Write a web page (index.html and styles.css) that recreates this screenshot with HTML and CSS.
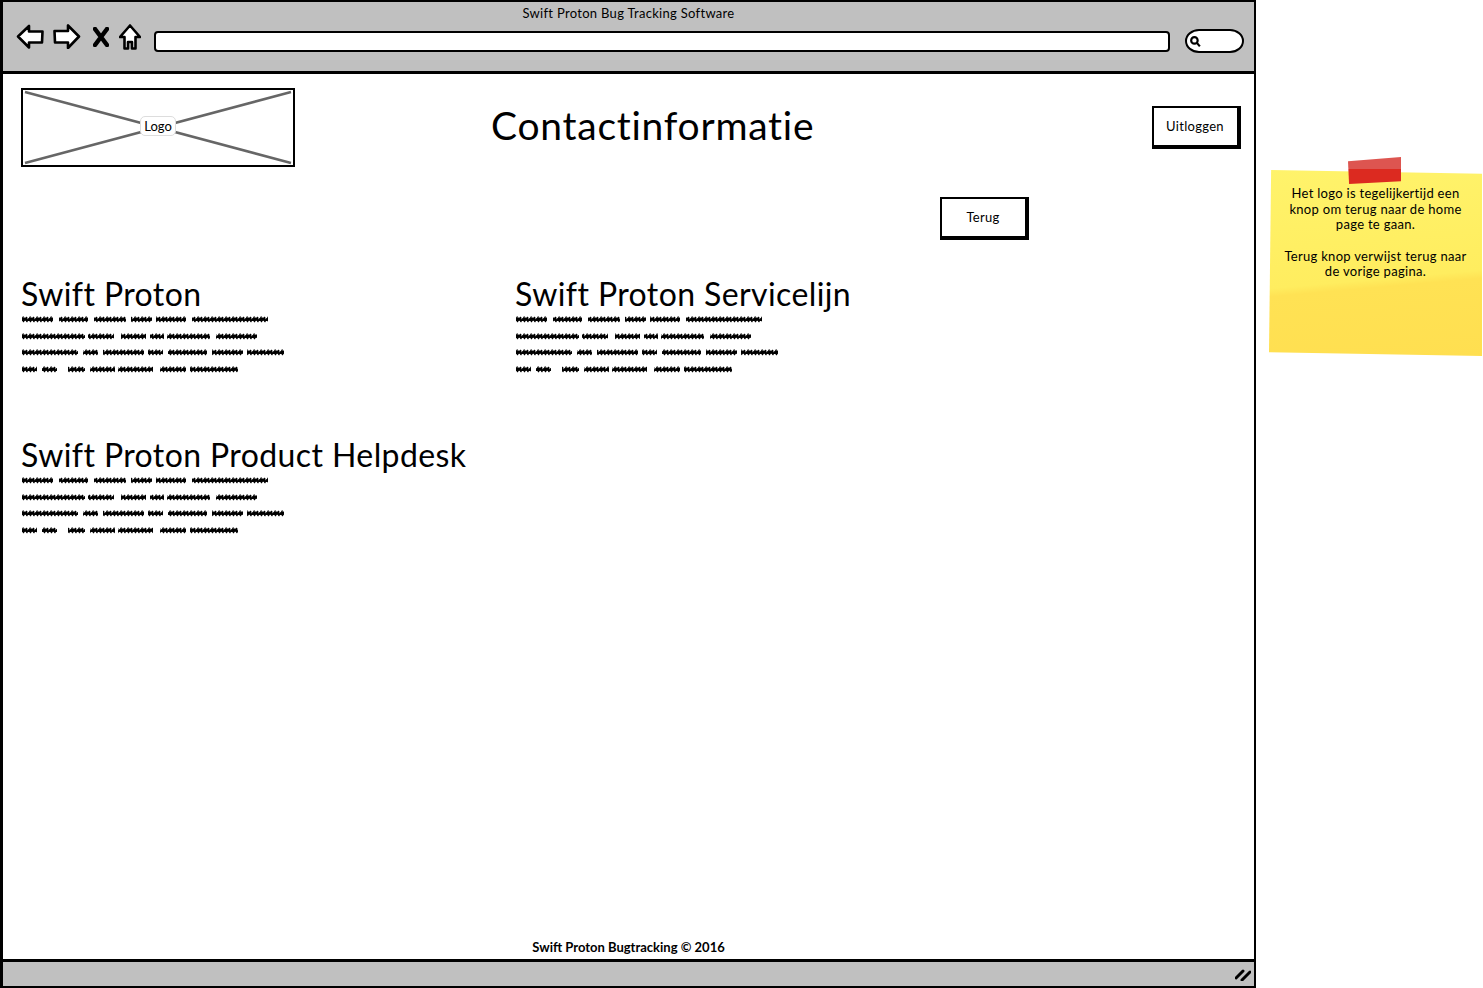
FILE: index.html
```html
<!DOCTYPE html>
<html lang="nl">
<head>
    <meta charset="UTF-8">
    <meta name="viewport" content="width=device-width, initial-scale=1.0">
    <title>Swift Proton Bug Tracking Software</title>
    <link rel="stylesheet" href="styles.css">
</head>
<body>
    <svg class="defs" width="0" height="0">
        <defs>
            <pattern id="scribble" width="7" height="8" patternUnits="userSpaceOnUse">
                <path d="M0 4.4 C2 5 3 3.8 4 4 S6 5 7 4.4" fill="none" stroke="#000" stroke-width="3"/>
                <path d="M0.5 5 L2.5 1.5 M4 5 L6 2 M2 7 L3.5 5 M5.5 7 L6.5 5.5" fill="none" stroke="#000" stroke-width="1.4"/>
            </pattern>
            <symbol id="scribble-text" viewBox="0 0 264 58">
                <g fill="url(#scribble)">
                    <g>
                        <rect x="1" y="0" width="31" height="8" rx="2"/><rect x="38" y="0" width="29" height="8" rx="2"/><rect x="73" y="0" width="32" height="8" rx="2"/><rect x="110" y="0" width="21" height="8" rx="2"/><rect x="135" y="0" width="30" height="8" rx="2"/><rect x="171" y="0" width="76" height="8" rx="2"/>
                    </g>
                    <g transform="translate(0 17)">
                        <rect x="1" y="0" width="63" height="8" rx="2"/><rect x="67" y="0" width="26" height="8" rx="2"/><rect x="100" y="0" width="25" height="8" rx="2"/><rect x="129" y="0" width="14" height="8" rx="2"/><rect x="146" y="0" width="43" height="8" rx="2"/><rect x="195" y="0" width="41" height="8" rx="2"/>
                    </g>
                    <g transform="translate(0 33)">
                        <rect x="1" y="0" width="56" height="8" rx="2"/><rect x="62" y="0" width="15" height="8" rx="2"/><rect x="82" y="0" width="41" height="8" rx="2"/><rect x="127" y="0" width="15" height="8" rx="2"/><rect x="147" y="0" width="39" height="8" rx="2"/><rect x="191" y="0" width="31" height="8" rx="2"/><rect x="226" y="0" width="37" height="8" rx="2"/>
                    </g>
                    <g transform="translate(0 50)">
                        <rect x="1" y="0" width="15" height="8" rx="2"/><rect x="21" y="0" width="15" height="8" rx="2"/><rect x="47" y="0" width="17" height="8" rx="2"/><rect x="69" y="0" width="25" height="8" rx="2"/><rect x="97" y="0" width="35" height="8" rx="2"/><rect x="139" y="0" width="26" height="8" rx="2"/><rect x="169" y="0" width="48" height="8" rx="2"/>
                    </g>
                </g>
            </symbol>
        </defs>
    </svg>

    <div class="page">
        <div class="window">
            <header class="toolbar">
                <div class="window-title">Swift Proton Bug Tracking Software</div>
                <div class="nav-row">
                    <svg class="nav-icon back" viewBox="0 0 28 25"><path d="M2 12.5 L13 2 V7.5 H26.5 L26 18.5 H13 V23.5 Z"/></svg>
                    <svg class="nav-icon forward" viewBox="0 0 28 25"><path d="M26 12.5 L15 1.5 V7 H1.5 L2 18.5 H15 V24 Z"/></svg>
                    <svg class="nav-icon close" viewBox="0 0 16 20"><path d="M2 2 L14 18 M14 2 L2 18"/></svg>
                    <svg class="nav-icon home" viewBox="0 0 22 26"><path d="M11 1.5 L21 13 H16.5 V24.5 H13 V18 H9 V24.5 H5.5 V13 H1 Z"/></svg>
                    <div class="address-bar"></div>
                    <div class="search-box">
                        <svg class="search-icon" viewBox="0 0 12 12"><circle cx="5" cy="5" r="3"/><path d="M7.5 7.5 L10 10.5"/></svg>
                    </div>
                </div>
            </header>

            <main class="content">
                <div class="top-row">
                    <div class="logo">
                        <svg class="logo-cross" viewBox="0 0 270 75" preserveAspectRatio="none"><path d="M2 2 L268 73 M268 2 L2 73"/></svg>
                        <span class="logo-label">Logo</span>
                    </div>
                    <h1 class="page-title">Contactinformatie</h1>
                    <button class="sketch-btn logout" type="button">Uitloggen</button>
                </div>

                <div class="back-row">
                    <button class="sketch-btn" type="button">Terug</button>
                </div>

                <div class="contact-grid">
                    <section class="contact">
                        <h2>Swift Proton</h2>
                        <svg class="scribble"><use href="#scribble-text"/></svg>
                    </section>
                    <section class="contact">
                        <h2>Swift Proton Servicelijn</h2>
                        <svg class="scribble"><use href="#scribble-text"/></svg>
                    </section>
                    <section class="contact">
                        <h2>Swift Proton Product Helpdesk</h2>
                        <svg class="scribble"><use href="#scribble-text"/></svg>
                    </section>
                </div>
            </main>

            <footer class="footer-text">Swift Proton Bugtracking &copy; 2016</footer>
            <div class="status-bar">
                <svg class="grip" viewBox="0 0 16 12"><path d="M1 9 L8 2 M7 11 L15 3"/></svg>
            </div>
        </div>

        <aside class="note-wrap">
            <div class="tape"></div>
            <div class="note">
                <p>Het logo is tegelijkertijd een<br>knop om terug naar de home<br>page te gaan.</p>
                <p>Terug knop verwijst terug naar<br>de vorige pagina.</p>
            </div>
        </aside>
    </div>
</body>
</html>
```

FILE: styles.css
```css
body {
    margin: 0;
    background-color: #fff;
    color: #000;
    font-family: "Lato", "Open Sans", sans-serif;
}
.defs {
    position: absolute;
}
.page {
    display: flex;
    height: 988px;
    overflow: hidden;
}
.window {
    display: flex;
    flex-direction: column;
    box-sizing: border-box;
    width: 1256px;
    height: 988px;
    flex-shrink: 0;
    border: solid #000;
    border-width: 2px 2px 2px 3px;
}
.toolbar {
    box-sizing: border-box;
    height: 72px;
    background-color: #c0c0c0;
    border-bottom: 3px solid #000;
}
.window-title {
    margin-top: 3px;
    font-size: 13px;
    line-height: 16px;
    letter-spacing: 0.3px;
    text-align: center;
}
.nav-row {
    display: flex;
    align-items: flex-start;
    margin-top: 3px;
    padding-left: 13px;
}
.nav-icon {
    fill: #fff;
    stroke: #000;
    stroke-width: 2.6;
    stroke-linejoin: round;
    flex-shrink: 0;
}
.back, .forward {
    width: 28px;
    height: 25px;
}
.forward {
    margin-left: 9px;
}
.close {
    width: 16px;
    height: 20px;
    margin: 3px 0 0 12px;
    stroke-width: 4.5;
    stroke-linecap: round;
}
.home {
    width: 22px;
    height: 26px;
    margin-left: 10px;
}
.address-bar {
    box-sizing: border-box;
    width: 1016px;
    height: 21px;
    margin: 7px 0 0 13px;
    background-color: #fff;
    border: 2.5px solid #000;
    border-radius: 4px;
}
.search-box {
    display: flex;
    align-items: center;
    box-sizing: border-box;
    width: 59px;
    height: 24px;
    margin: 5px 0 0 15px;
    padding-left: 2px;
    background-color: #fff;
    border: 2.5px solid #000;
    border-radius: 14px / 12px;
}
.search-icon {
    width: 13px;
    height: 13px;
    fill: none;
    stroke: #000;
    stroke-width: 2;
}
.content {
    flex: 1;
    padding: 14px 0 0 18px;
}
.top-row {
    display: flex;
    align-items: flex-start;
}
.logo {
    position: relative;
    display: flex;
    align-items: center;
    justify-content: center;
    box-sizing: border-box;
    width: 274px;
    height: 79px;
    border: 2px solid #000;
}
.logo-cross {
    position: absolute;
    top: 0;
    left: 0;
    width: 100%;
    height: 100%;
    stroke: #666;
    stroke-width: 2.5;
    fill: none;
}
.logo-label {
    position: relative;
    margin-bottom: 3px;
    padding: 2px 3px;
    background-color: #fff;
    border: 1px solid #ddd;
    border-radius: 5px;
    font-size: 13px;
    line-height: 14px;
}
.page-title {
    margin: 13px 0 0 196px;
    font-size: 39px;
    line-height: 48px;
    font-weight: 400;
    letter-spacing: 0.75px;
}
.sketch-btn {
    box-sizing: border-box;
    width: 89px;
    height: 43px;
    padding: 0 1px 1px 0;
    background-color: #fff;
    border: solid #000;
    border-width: 2px 4px 4px 2px;
    font-family: inherit;
    font-size: 13px;
    letter-spacing: 0.3px;
    color: #000;
}
.logout {
    margin: 18px 13px 0 auto;
}
.back-row {
    margin: 30px 0 0 919px;
}
.contact-grid {
    display: grid;
    grid-template-columns: 494px 494px;
    grid-auto-rows: 161px;
    margin-top: 34px;
}
.contact h2 {
    margin: 0;
    font-size: 32px;
    line-height: 40px;
    font-weight: 400;
    letter-spacing: 0.4px;
}
.scribble {
    display: block;
    width: 264px;
    height: 58px;
    margin-top: 1px;
}
.footer-text {
    font-size: 13px;
    line-height: 16px;
    font-weight: 700;
    text-align: center;
    margin-bottom: 4px;
}
.status-bar {
    display: flex;
    align-items: center;
    justify-content: flex-end;
    box-sizing: border-box;
    height: 27px;
    padding: 2px 3px 0 0;
    background-color: #c0c0c0;
    border-top: 3px solid #000;
}
.grip {
    width: 16px;
    height: 12px;
    fill: none;
    stroke: #000;
    stroke-width: 3;
    stroke-linecap: round;
}
.note-wrap {
    position: relative;
    flex-shrink: 0;
    width: 213px;
    height: 186px;
    margin: 170px 0 0 13px;
}
.note {
    box-sizing: border-box;
    height: 100%;
    padding: 16px 4px 0;
    background: linear-gradient(175deg, #fff36b 0%, #ffed5f 58%, #ffe254 62%, #ffdf50 100%);
    clip-path: polygon(1% 0, 100% 2%, 100% 100%, 0 98%);
    font-size: 13px;
    line-height: 15.6px;
    letter-spacing: 0.3px;
    text-align: center;
}
.note p {
    margin: 0 0 16px;
}
.tape {
    position: absolute;
    z-index: 1;
    top: -13px;
    left: 79px;
    width: 53px;
    height: 27px;
    background: linear-gradient(#dd5550 0 45%, #dc2a20 45% 100%);
    clip-path: polygon(0 16%, 100% 0, 100% 90%, 2% 100%);
}
```
